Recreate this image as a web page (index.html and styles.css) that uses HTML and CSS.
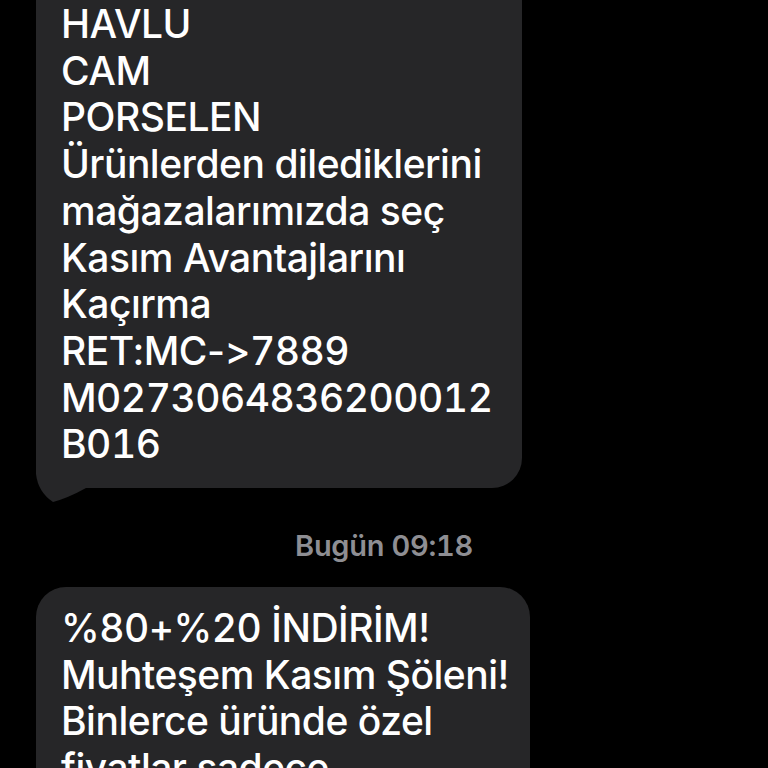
FILE: index.html
```html
<!DOCTYPE html>
<html lang="tr">
<head>
<meta charset="utf-8">
<title>Mesajlar</title>
<link rel="stylesheet" href="styles.css">
</head>
<body>
  <div class="thread">
    <div class="bubble first">
      <svg class="tail" width="50" height="62" viewBox="0 0 50 62">
        <path d="M0 0 L0 34 Q2 52 17 62 Q32 58 50 48 L50 0 Z"/>
      </svg>
      <p>HAVLU<br>CAM<br>PORSELEN<br>Ürünlerden dilediklerini<br>mağazalarımızda seç<br>Kasım Avantajlarını<br>Kaçırma<br><span class="plain">RET:MC-&gt;</span>7889<br>M0273064836200012<br>B016</p>
    </div>

    <div class="stamp">Bugün 09:18</div>

    <div class="bubble second">
      <p>%80+%20 İNDİRİM!<br>Muhteşem Kasım Şöleni!<br>Binlerce üründe özel<br>fiyatlar sadece</p>
    </div>
  </div>
</body>
</html>
```

FILE: styles.css
```css
/* sohbet ekranı */
body {
  margin: 0;
  background: #000;
  font-family: Inter, "Liberation Sans", sans-serif;
  font-feature-settings: "calt" 0, "tnum" 1;
  color: #fff;
  overflow: hidden;
}
.thread {
  padding-left: 36px;
}
.bubble {
  position: relative;
  background: #262628;
  border-radius: 30px;
  padding: 18px 20px 20px 25px;
  box-sizing: border-box;
}
.bubble p {
  position: relative;
  margin: 0;
  font-size: 39px;
  line-height: 46.7px;
  font-weight: 500;
  letter-spacing: -0.5px;
  white-space: nowrap;
}
.plain {
  font-feature-settings: "calt" 0;  /* ":" ve "-" dar kalsın */
}
.first {
  width: 486px;
  margin-top: -60px;   /* üst kısım ekranın dışında */
  padding-top: 61px;
}
.second {
  width: 494px;
  margin-top: 25px;
  padding-bottom: 60px;
}
.tail {
  position: absolute;
  left: 0;
  bottom: -14px;
  fill: #262628;
}
.stamp {
  margin-top: 42px;
  padding-right: 36px;
  text-align: center;
  color: #8e8e93;
  font-size: 29px;
  line-height: 32px;
  font-weight: 600;
  letter-spacing: -0.3px;
}
```
